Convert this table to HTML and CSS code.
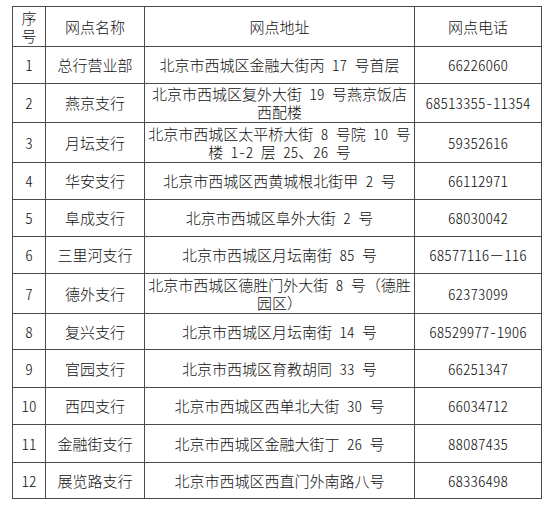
FILE: index.html
```html
<!DOCTYPE html>
<html lang="zh-CN">
<head>
<meta charset="utf-8">
<title>网点列表</title>
<link rel="stylesheet" href="styles.css">
</head>
<body>
<div class="wrap">
<table class="branches">
  <colgroup>
    <col class="c-no">
    <col class="c-name">
    <col class="c-addr">
    <col class="c-tel">
  </colgroup>
  <thead>
    <tr class="h40"><th>序号</th><th>网点名称</th><th>网点地址</th><th>网点电话</th></tr>
  </thead>
  <tbody>
    <tr class="h37"><td>1</td><td>总行营业部</td><td>北京市西城区金融大街丙 17 号首层</td><td>66226060</td></tr>
    <tr class="h39"><td>2</td><td>燕京支行</td><td>北京市西城区复外大街 19 号燕京饭店西配楼</td><td>68513355-11354</td></tr>
    <tr class="h40"><td>3</td><td>月坛支行</td><td>北京市西城区太平桥大街 8 号院 10 号楼 1-2 层 25、26 号</td><td>59352616</td></tr>
    <tr class="h37"><td>4</td><td>华安支行</td><td>北京市西城区西黄城根北街甲 2 号</td><td>66112971</td></tr>
    <tr class="h37"><td>5</td><td>阜成支行</td><td>北京市西城区阜外大街 2 号</td><td>68030042</td></tr>
    <tr class="h37"><td>6</td><td>三里河支行</td><td>北京市西城区月坛南街 85 号</td><td>68577116<span class="fw">－</span>116</td></tr>
    <tr class="h40"><td>7</td><td>德外支行</td><td>北京市西城区德胜门外大街 8 号<span class="fw">（</span>德胜园区<span class="fw">）</span></td><td>62373099</td></tr>
    <tr class="h36"><td>8</td><td>复兴支行</td><td>北京市西城区月坛南街 14 号</td><td>68529977-1906</td></tr>
    <tr class="h38"><td>9</td><td>官园支行</td><td>北京市西城区育教胡同 33 号</td><td>66251347</td></tr>
    <tr class="h37"><td>10</td><td>西四支行</td><td>北京市西城区西单北大街 30 号</td><td>66034712</td></tr>
    <tr class="h38"><td>11</td><td>金融街支行</td><td>北京市西城区金融大街丁 26 号</td><td>88087435</td></tr>
    <tr class="h36"><td>12</td><td>展览路支行</td><td>北京市西城区西直门外南路八号</td><td>68336498</td></tr>
  </tbody>
</table>
</div>
</body>
</html>
```
FILE: styles.css
```css
html, body {
  margin: 0;
  padding: 0;
  background: #ffffff;
}

.wrap {
  padding: 6px 0 0 12px;
}

.branches {
  border-collapse: collapse;
  table-layout: fixed;
  width: 529px;
  font-family: "Noto Sans CJK SC", "Noto Sans", sans-serif;
  font-size: 15px;
  line-height: 18px;
  font-weight: 300;
  font-feature-settings: "hwid" 1;
  color: #111;
  border: 1px solid #3a3a3a;
}

.c-no { width: 33px; }
.c-name { width: 99px; }
.c-addr { width: 270px; }
.c-tel { width: 127px; }

.branches th,
.branches td {
  border: 1px solid #4a4a4a;
  padding: 0 2px;
  text-align: center;
  vertical-align: middle;
  font-weight: 300;
}

.branches th:first-child {
  padding: 0 8px;
}

.fw {
  font-feature-settings: normal;
}

.h36 { height: 36px; }
.h37 { height: 37px; }
.h38 { height: 38px; }
.h39 { height: 39px; }
.h40 { height: 40px; }
```
